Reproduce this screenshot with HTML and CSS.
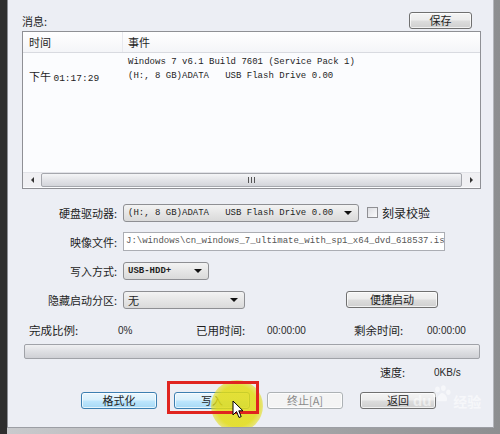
FILE: index.html
```html
<!DOCTYPE html>
<html lang="zh-CN">
<head>
    <meta charset="UTF-8">
    <title>写入硬盘映像</title>
    <link rel="stylesheet" href="styles.css">
</head>
<body>
    <div class="screen">
        <div class="dialog">
            <div class="top-row">
                <span class="caption">消息:</span>
                <button class="btn btn-save">保存</button>
            </div>

            <div class="log">
                <div class="log-head">
                    <div class="col-time">时间</div>
                    <div class="col-event">事件</div>
                </div>
                <div class="log-body">
                    <div class="log-row">
                        <div class="col-time"></div>
                        <div class="col-event mono">Windows 7 v6.1 Build 7601 (Service Pack 1)</div>
                    </div>
                    <div class="log-row">
                        <div class="col-time">下午 <span class="mono">01:17:29</span></div>
                        <div class="col-event mono">(H:, 8 GB)ADATA   USB Flash Drive 0.00</div>
                    </div>
                </div>
                <div class="hscroll">
                    <span class="arrow arrow-left"></span>
                    <div class="thumb"><span class="grip"></span></div>
                    <span class="arrow arrow-right"></span>
                </div>
            </div>

            <div class="form">
                <div class="form-row">
                    <label class="label">硬盘驱动器:</label>
                    <div class="combo combo-drive"><span class="mono">(H:, 8 GB)ADATA   USB Flash Drive 0.00</span><span class="drop"></span></div>
                    <span class="check"></span>
                    <span class="check-text">刻录校验</span>
                </div>
                <div class="form-row">
                    <label class="label">映像文件:</label>
                    <div class="textbox mono">J:\windows\cn_windows_7_ultimate_with_sp1_x64_dvd_618537.is</div>
                </div>
                <div class="form-row">
                    <label class="label">写入方式:</label>
                    <div class="combo combo-mode"><span class="mono bold">USB-HDD+</span><span class="drop"></span></div>
                </div>
                <div class="form-row">
                    <label class="label">隐藏启动分区:</label>
                    <div class="combo combo-hide"><span>无</span><span class="drop"></span></div>
                    <button class="btn btn-quick">便捷启动</button>
                </div>
            </div>

            <div class="stats">
                <span class="stat-label">完成比例:</span>
                <span class="stat-value">0%</span>
                <span class="stat-label">已用时间:</span>
                <span class="stat-value">00:00:00</span>
                <span class="stat-label">剩余时间:</span>
                <span class="stat-value">00:00:00</span>
            </div>

            <div class="progress"></div>

            <div class="speed">
                <span>速度:</span>
                <span class="stat-value">0KB/s</span>
            </div>

            <div class="actions">
                <button class="btn btn-blue">格式化</button>
                <div class="write-wrap">
                    <button class="btn btn-blue btn-write">写入</button>
                    <span class="spot"></span>
                    <span class="mark"></span>
                    <svg class="cursor" width="12" height="19" viewBox="0 0 12 19">
                        <path d="M1 1 L1 15 L4.5 11.5 L7 17.5 L9.2 16.6 L6.8 10.8 L11 10.8 Z" fill="#fff" stroke="#000" stroke-width="1" stroke-linejoin="round"/>
                    </svg>
                </div>
                <button class="btn btn-disabled">终止[A]</button>
                <button class="btn">返回</button>
                <div class="watermark">
                    <span class="wm-du">du</span>
                    <svg class="paw" width="20" height="20" viewBox="0 0 22 20">
                        <ellipse cx="6" cy="5" rx="2.6" ry="3.2" fill="#fff"/>
                        <ellipse cx="12.5" cy="3.5" rx="2.6" ry="3.2" fill="#fff"/>
                        <ellipse cx="18" cy="8" rx="2.4" ry="3" fill="#fff"/>
                        <ellipse cx="3" cy="11" rx="2.2" ry="2.8" fill="#fff"/>
                        <path d="M6 18 C4 14 9 9 11 9 C14 9 18 14 16 18 Z" fill="#fff"/>
                    </svg>
                    <span class="wm-jy">经验</span>
                </div>
            </div>
        </div>
    </div>
</body>
</html>
```

FILE: styles.css
```css
* {
    box-sizing: border-box;
}
body {
    margin: 0;
    background: #2c2c2c;
    font-family: "Noto Sans CJK SC", sans-serif;
    font-size: 11px;
    color: #1e1e1e;
}
.screen {
    width: 500px;
    height: 434px;
    display: flex;
    border-left: 7px solid #2e2e2e;
    padding-bottom: 6px;
    background: linear-gradient(to right, #c9cacd, #8d8e90);
}
.dialog {
    width: 487px;
    height: 428px;
    background: #eceef4;
    border-left: 1px solid #8c8e94;
    border-right: 1px solid #b4b6bc;
    border-bottom: 1px solid #9c9ea4;
    padding: 12px 12px 0 14px;
    display: flex;
    flex-direction: column;
    position: relative;
    overflow: hidden;
}
.mono {
    font-family: "Liberation Mono", monospace;
    font-size: 9px;
}
.bold {
    font-weight: bold;
}

/* top */
.top-row {
    height: 19px;
    display: flex;
    justify-content: space-between;
    align-items: flex-start;
}
.caption {
    line-height: 16px;
    padding-top: 1px;
}
.btn {
    height: 17px;
    padding: 0;
    border: 1px solid #707070;
    border-radius: 3px;
    background: linear-gradient(#f4f4f4 0%, #ececec 48%, #dddddd 52%, #cfcfcf 100%);
    font-family: "Noto Sans CJK SC", sans-serif;
    font-size: 11px;
    line-height: 15px;
    color: #1e1e1e;
    box-shadow: inset 0 0 0 1px rgba(255, 255, 255, 0.7);
}
.btn-save {
    width: 63px;
    margin-right: 9px;
}

/* log list */
.log {
    height: 158px;
    background: #fbfcfe;
    border: 1px solid #8f9095;
    display: flex;
    flex-direction: column;
}
.log-head {
    height: 21px;
    display: flex;
    align-items: center;
    background: linear-gradient(#ffffff, #f4f5f8);
    border-bottom: 1px solid #d8dae0;
}
.col-time {
    width: 100px;
    padding-left: 6px;
    white-space: pre;
}
.col-time .mono {
    font-size: 9.5px;
}
.col-event {
    flex: 1;
    padding-left: 5px;
    white-space: pre;
}
.log-head .col-time {
    height: 100%;
    line-height: 20px;
    border-right: 1px solid #e8e9ee;
}
.log-body {
    flex: 1;
    padding-top: 2px;
}
.log-row {
    height: 14px;
    display: flex;
    align-items: center;
}
.hscroll {
    height: 15px;
    display: flex;
    align-items: center;
    background: #f0f0f3;
    border-top: 1px solid #e2e3e8;
    margin-bottom: 1px;
}
.arrow {
    width: 18px;
    display: flex;
    justify-content: center;
}
.arrow-left::before {
    content: "";
    border-top: 3px solid transparent;
    border-bottom: 3px solid transparent;
    border-right: 3px solid #333;
}
.arrow-right::before {
    content: "";
    border-top: 3px solid transparent;
    border-bottom: 3px solid transparent;
    border-left: 3px solid #333;
}
.thumb {
    flex: 1;
    height: 14px;
    border: 1px solid #a5a7ad;
    border-radius: 2px;
    background: linear-gradient(#f4f5f7, #e3e4e8 50%, #d3d5da);
    display: flex;
    justify-content: center;
    align-items: center;
}
.grip {
    width: 7px;
    height: 6px;
    border-left: 1px solid #555;
    border-right: 1px solid #555;
    position: relative;
}
.grip::after {
    content: "";
    position: absolute;
    left: 2px;
    top: 0;
    height: 6px;
    border-left: 1px solid #555;
}

/* form */
.form {
    margin-top: 14px;
    display: flex;
    flex-direction: column;
    gap: 10px;
}
.form-row {
    height: 19px;
    display: flex;
    align-items: center;
}
.label {
    width: 101px;
    padding-right: 6px;
    text-align: right;
}
.combo {
    height: 18px;
    border: 1px solid #8e8f93;
    border-radius: 3px;
    background: linear-gradient(#f3f3f3, #e6e6e6 50%, #dadada);
    display: flex;
    align-items: center;
    justify-content: space-between;
    padding: 0 6px 0 4px;
    white-space: pre;
}
.drop {
    border-left: 4px solid transparent;
    border-right: 4px solid transparent;
    border-top: 4px solid #111;
}
.combo-drive {
    width: 236px;
}
.combo-mode {
    width: 86px;
}
.combo-hide {
    width: 122px;
}
.check {
    width: 11px;
    height: 11px;
    margin-left: 8px;
    border: 1px solid #8f8f93;
    background: linear-gradient(135deg, #dcdde2, #fbfbfc);
}
.check-text {
    margin-left: 4px;
    font-size: 12px;
}
.textbox {
    width: 322px;
    height: 19px;
    border: 1px solid #abadb3;
    background: #ffffff;
    color: #555;
    padding: 0 2px;
    line-height: 17px;
    white-space: pre;
    overflow: hidden;
}
.btn-quick {
    width: 92px;
    margin-left: 101px;
}

/* progress */
.stats {
    margin-top: 13px;
    height: 14px;
    padding-left: 7px;
    display: grid;
    grid-template-columns: 89px 78px 71px 87px 73px auto;
    align-items: center;
}
.stat-label {
    font-size: 11.5px;
}
.stat-value {
    font-family: "Liberation Sans", sans-serif;
    font-size: 10px;
    color: #2a2a2a;
}
.progress {
    margin: 8px 1px 0 2px;
    height: 15px;
    border: 1px solid #a0a2a8;
    border-radius: 2px;
    background: linear-gradient(#f0f0f2, #dedfe3 50%, #cfd0d5);
}
.speed {
    margin-top: 6px;
    height: 14px;
    display: flex;
    align-items: center;
    padding-left: 358px;
    gap: 29px;
}

/* buttons */
.actions {
    margin-top: 13px;
    height: 17px;
    padding-left: 59px;
    display: flex;
    gap: 17px;
    position: relative;
}
.actions .btn {
    width: 76px;
}
.btn-blue {
    border-color: #3c7fb1;
    background: linear-gradient(#eaf6fd 0%, #d9f0fc 48%, #bee6fd 52%, #a7d9f5 100%);
}
.btn-disabled {
    border-color: #adb2b5;
    background: #f4f4f4;
    color: #8a8a8a;
}
.write-wrap {
    position: relative;
    display: flex;
}
.spot {
    position: absolute;
    left: 37px;
    top: -12px;
    width: 52px;
    height: 52px;
    border-radius: 50%;
    background: radial-gradient(circle, rgba(226, 220, 20, 0.85) 55%, rgba(226, 220, 20, 0.35) 80%, rgba(226, 220, 20, 0) 100%);
}
.mark {
    position: absolute;
    left: -7px;
    top: -11px;
    width: 92px;
    height: 33px;
    border: 3px solid #e0241f;
}
.cursor {
    position: absolute;
    left: 58px;
    top: 8px;
}
.watermark {
    position: absolute;
    left: 391px;
    top: -8px;
    display: flex;
    align-items: flex-end;
    white-space: nowrap;
    opacity: 0.55;
    font-family: "Liberation Sans", sans-serif;
    font-weight: bold;
    color: #fff;
}
.paw {
    margin: 0 1px 8px;
}
.wm-du {
    font-size: 15px;
    line-height: 22px;
}
.wm-jy {
    font-family: "Noto Sans CJK SC", sans-serif;
    font-size: 14px;
    line-height: 22px;
}
```
